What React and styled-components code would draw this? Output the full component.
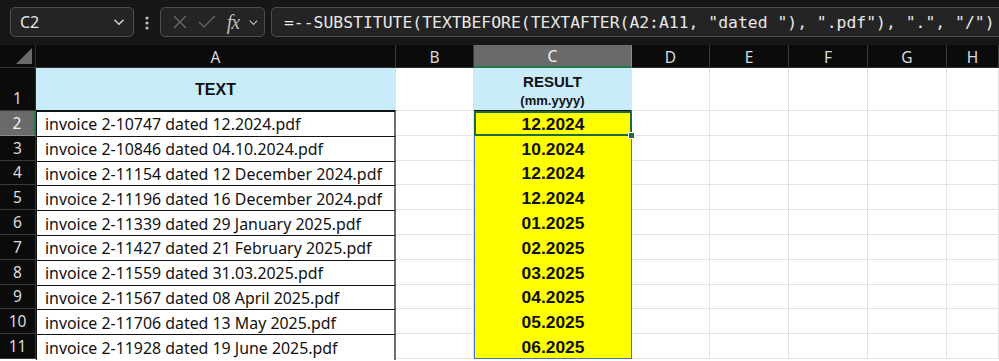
import React from "react";
import styled, { createGlobalStyle, css } from "styled-components";

const GlobalStyle = createGlobalStyle`
  html, body {
    margin: 0;
    padding: 0;
    background: #0b0b0b;
    overflow: hidden;
  }
  * { box-sizing: border-box; }
`;

const rows = [
  ["invoice 2-10747 dated 12.2024.pdf", "12.2024"],
  ["invoice 2-10846 dated 04.10.2024.pdf", "10.2024"],
  ["invoice 2-11154 dated 12 December 2024.pdf", "12.2024"],
  ["invoice 2-11196 dated 16 December 2024.pdf", "12.2024"],
  ["invoice 2-11339 dated 29 January 2025.pdf", "01.2025"],
  ["invoice 2-11427 dated 21 February 2025.pdf", "02.2025"],
  ["invoice 2-11559 dated 31.03.2025.pdf", "03.2025"],
  ["invoice 2-11567 dated 08 April 2025.pdf", "04.2025"],
  ["invoice 2-11706 dated 13 May 2025.pdf", "05.2025"],
  ["invoice 2-11928 dated 19 June 2025.pdf", "06.2025"],
];

const columns = ["A", "B", "C", "D", "E", "F", "G", "H"];

const Window = styled.div`
  width: 999px;
  height: 361px;
  display: flex;
  flex-direction: column;
  background: #0b0b0b;
  font-family: "Noto Sans", "Liberation Sans", sans-serif;
`;

const FormulaBar = styled.div`
  height: 45px;
  flex: none;
  display: flex;
  align-items: center;
  padding: 0 0 0 10px;
  background: #171717;
`;

const Box = styled.div`
  height: 30px;
  margin-bottom: 1px;
  display: flex;
  align-items: center;
  border: 1px solid #4e4e4e;
  border-radius: 5px;
  background: #242424;
  color: #e8e8e8;
`;

const NameBox = styled(Box)`
  width: 124px;
  padding: 0 6px 0 9px;
  justify-content: space-between;
  font-size: 16px;
`;

const Dots = styled.div`
  width: 26px;
  display: flex;
  justify-content: center;
`;

const FuncBox = styled(Box)`
  width: 105px;
  padding: 0 4px 0 10px;
  gap: 8px;
`;

const Fx = styled.span`
  font-family: "Liberation Serif", "DejaVu Serif", serif;
  font-style: italic;
  font-size: 20px;
  color: #bdbdbd;
  margin-left: 2px;
  letter-spacing: -1px;
`;

const FormulaBox = styled(Box)`
  flex: 1;
  margin-left: 6px;
  border-right: none;
  border-radius: 5px 0 0 5px;
  padding-left: 12px;
  font-family: "DejaVu Sans Mono", "Liberation Mono", monospace;
  font-size: 16.4px;
  white-space: nowrap;
  overflow: hidden;
`;

const Sheet = styled.div`
  flex: 1;
  display: grid;
  grid-template-columns: 36px 360px 78px 158px 78px 79px 79px 79px 1fr;
  grid-template-rows: 23px 43px repeat(10, 24.8px);
  background: #ffffff;
`;

const Corner = styled.div`
  position: relative;
  background: #0b0b0b;
  border-right: 1px solid #2e2e2e;
  border-bottom: 1px solid #2e2e2e;
`;

const Triangle = styled.div`
  position: absolute;
  right: 3px;
  bottom: 3px;
  width: 0;
  height: 0;
  border-left: 16px solid transparent;
  border-bottom: 16px solid #6a6a6a;
`;

const ColHead = styled.div`
  display: flex;
  align-items: center;
  justify-content: center;
  background: ${(p) => (p.$active ? "#6a6a6a" : "#0b0b0b")};
  color: ${(p) => (p.$active ? "#f4f4f4" : "#dcdcdc")};
  border-right: 1px solid ${(p) => (p.$active ? "#8a8a8a" : "#3a3a3a")};
  border-bottom: ${(p) => (p.$active ? "2px solid #1d7a46" : "1px solid #2e2e2e")};
  font-size: 15.5px;
  padding-top: 1px;
`;

const RowHead = styled.div`
  display: flex;
  align-items: flex-end;
  justify-content: center;
  padding-bottom: 1px;
  background: ${(p) => (p.$active ? "#6a6a6a" : "#0b0b0b")};
  color: ${(p) => (p.$active ? "#f4f4f4" : "#dcdcdc")};
  border-bottom: 1px solid ${(p) => (p.$active ? "#8a8a8a" : "#3a3a3a")};
  border-right: ${(p) => (p.$active ? "2px solid #1d7a46" : "1px solid #2e2e2e")};
  font-size: 15.5px;
`;

const Cell = styled.div`
  position: relative;
  display: flex;
  align-items: center;
  justify-content: ${(p) => (p.$center ? "center" : "flex-start")};
  padding: 0 8px;
  background: ${(p) => p.$bg || "#ffffff"};
  color: #111;
  border-right: 1px solid #e2e2e2;
  border-bottom: 1px solid #e2e2e2;
  font-size: 15.9px;
  white-space: nowrap;
  ${(p) =>
    p.$bold &&
    css`
      font-family: "Liberation Sans", Arial, sans-serif;
      font-weight: 700;
      font-size: 17.4px;
      padding-top: 2px;
    `}
  ${(p) =>
    p.$boxed &&
    css`
      border-top: 1px solid #111;
      border-left: 1px solid #111;
      border-bottom: none;
      border-right: 2px solid #6e6e6e;
      margin-bottom: -1px;
      z-index: 1;
    `}
  ${(p) =>
    p.$result &&
    css`
      border-left: 1px solid #3f6fc6;
      border-right: 1px solid #3f6fc6;
      border-bottom: ${p.$last ? "1px solid #3f6fc6" : "none"};
    `}
  ${(p) =>
    p.$selected &&
    css`
      border: 2px solid #1d6b3f;
    `}
`;

const HeaderCell = styled(Cell)`
  flex-direction: column;
  justify-content: center;
  padding-top: 3px;
  font-family: "Liberation Sans", Arial, sans-serif;
  font-weight: 700;
  line-height: 1.4;
  background: #c8ecf9;
  border-right-color: ${(p) => p.$edge || "#e2e2e2"};
  border-bottom: 1px solid #111;
`;

const Small = styled.span`
  font-size: ${(p) => p.$size}px;
`;

const Handle = styled.div`
  position: absolute;
  right: -5px;
  bottom: -5px;
  width: 7px;
  height: 7px;
  background: #1d6b3f;
  border: 1px solid #ffffff;
  z-index: 3;
`;

const Chevron = ({ size = 14, color = "#d0d0d0" }) => (
  <svg width={size} height={size} viewBox="0 0 14 14">
    <path d="M3 5 L7 9 L11 5" fill="none" stroke={color} strokeWidth="1.3" />
  </svg>
);

const App = () => {
  return (
    <Window>
      <GlobalStyle />
      <FormulaBar>
        <NameBox>
          <span>C2</span>
          <Chevron size={16} />
        </NameBox>
        <Dots>
          <svg width="4" height="14" viewBox="0 0 4 14">
            <circle cx="2" cy="2" r="1.6" fill="#bdbdbd" />
            <circle cx="2" cy="7" r="1.6" fill="#bdbdbd" />
            <circle cx="2" cy="12" r="1.6" fill="#bdbdbd" />
          </svg>
        </Dots>
        <FuncBox>
          <svg width="18" height="18" viewBox="0 0 18 18">
            <path d="M3 3 L15 15 M15 3 L3 15" stroke="#6a6a6a" strokeWidth="1.3" fill="none" />
          </svg>
          <svg width="20" height="18" viewBox="0 0 20 18">
            <path d="M2 9 L7 14 L18 3" stroke="#6a6a6a" strokeWidth="1.3" fill="none" />
          </svg>
          <Fx>fx</Fx>
          <Chevron size={13} color="#bdbdbd" />
        </FuncBox>
        <FormulaBox>
          {'=--SUBSTITUTE(TEXTBEFORE(TEXTAFTER(A2:A11, "dated "), ".pdf"), ".", "/")'}
        </FormulaBox>
      </FormulaBar>

      <Sheet>
        <Corner>
          <Triangle />
        </Corner>
        {columns.map((c) => (
          <ColHead key={c} $active={c === "C"}>
            {c}
          </ColHead>
        ))}

        <RowHead>1</RowHead>
        <HeaderCell $center $edge="#c8ecf9">
          <Small $size={16}>TEXT</Small>
        </HeaderCell>
        <Cell />
        <HeaderCell $center $edge="#c8ecf9">
          <Small $size={15}>RESULT</Small>
          <Small $size={13}>(mm.yyyy)</Small>
        </HeaderCell>
        <Cell />
        <Cell />
        <Cell />
        <Cell />
        <Cell />

        {rows.map(([text, result], idx) => (
          <React.Fragment key={idx.toString()}>
            <RowHead $active={idx === 0}>{idx + 2}</RowHead>
            <Cell $boxed>{text}</Cell>
            <Cell />
            <Cell
              $bg="#ffff00"
              $bold
              $center
              $result={idx > 0}
              $last={idx === rows.length - 1}
              $selected={idx === 0}
            >
              {result}
              {idx === 0 && <Handle />}
            </Cell>
            <Cell />
            <Cell />
            <Cell />
            <Cell />
            <Cell />
          </React.Fragment>
        ))}
      </Sheet>
    </Window>
  );
};

export default App;
